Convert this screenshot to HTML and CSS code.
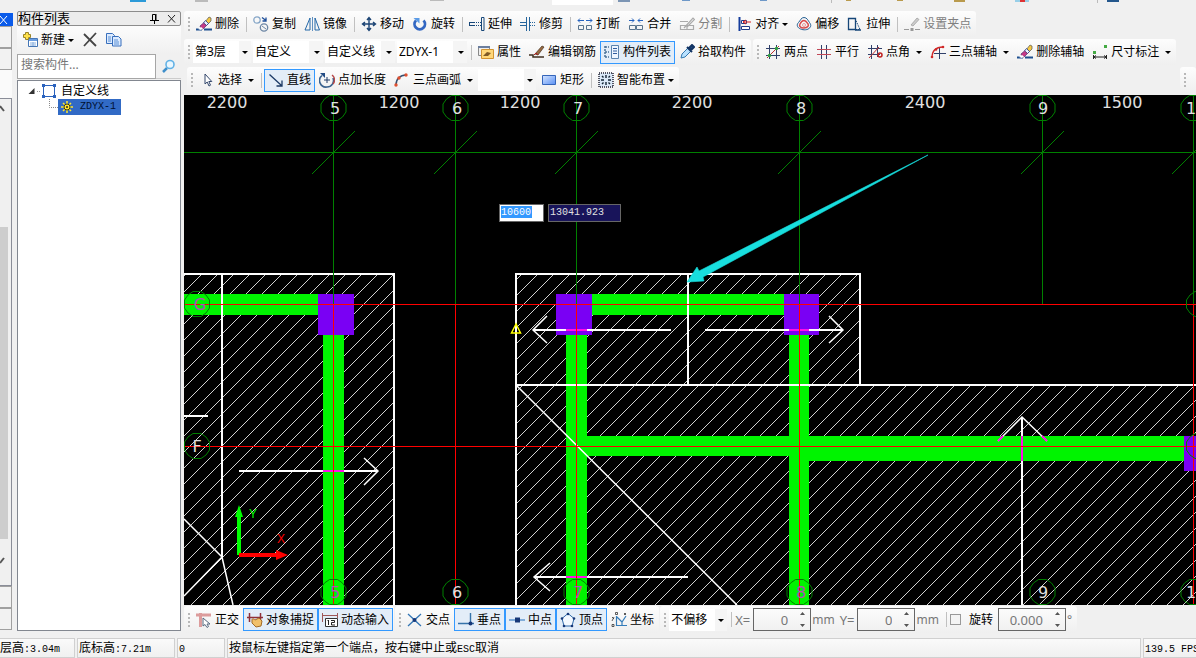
FILE: index.html
```
<!DOCTYPE html>
<html lang="zh-CN">
<head>
<meta charset="utf-8">
<title>构件列表</title>
<link rel="stylesheet" href="styles.css">
</head>
<body>
<svg class="sprite" aria-hidden="true">
  <symbol id="i-erase" viewBox="0 0 16 16"><path d="M0 12.500h6v2H0zM8 12.500h8v2H8z" fill="#1d4f8f"/><path d="M9 6l4-5 2 1v3l-4 4z" fill="#f5c842" stroke="#555" stroke-width=".7"/><path d="M7.500 7l2-2.500 3 3-2 2z" fill="#e8f0ff" stroke="#223a80" stroke-width=".8"/><path d="M4 10l3.500-3 3 2.500L7 13H5z" fill="#c63a86" stroke="#503070" stroke-width=".7"/><path d="M2 13l3-2 2 1.500L5 14z" fill="#fff"/></symbol>
  <symbol id="i-copy" viewBox="0 0 16 16" fill="none"><circle cx="4" cy="4" r="3.200" stroke="#87a7c8" stroke-width="1.300"/><circle cx="11" cy="11.500" r="3.700" stroke="#6d87a5" stroke-width="1.300"/><path d="M9 10l4 3" stroke="#6d87a5"/><path d="M9 1.500l4 3M13 1.500V5H9.500" stroke="#1f4f9a" stroke-width="1.300"/></symbol>
  <symbol id="i-mirror" viewBox="0 0 16 16" fill="none" stroke="#2468a8"><path d="M8.500 1v14" stroke="#6090c0"/><path d="M6 2v12H1zM11 2v12h4.500z"/></symbol>
  <symbol id="i-move" viewBox="0 0 16 16" fill="none" stroke="#1c4474" stroke-width="1.400"><path d="M8 2v12M2 8h12M6 4l2-2.500L10 4M6 12l2 2.500 2-2.500M4 6L1.500 8 4 10M12 6l2.500 2-2.500 2"/></symbol>
  <symbol id="i-rotate" viewBox="0 0 16 16"><path d="M4 4.500a5.200 5.200 0 1 0 7.500 0" fill="none" stroke="#3267c2" stroke-width="2.800"/><path d="M1.500 2h6v5.500z" fill="#5b9be6"/></symbol>
  <symbol id="i-extend" viewBox="0 0 16 16" fill="none" stroke="#164678"><path d="M0 6.500h6M0 9.500h6M.500 6v4"/><path d="M7 6.500h5M7 9.500h5" stroke-dasharray="1 1"/><path d="M12.500 1.500h2.500v13h-2.500z"/></symbol>
  <symbol id="i-trim" viewBox="0 0 16 16" fill="none" stroke="#26659c"><path d="M6.500 1v14M9.500 1v14M0 6.500h6M0 9.500h6"/><path d="M10 6.500h6M10 9.500h6" stroke-dasharray="1 1"/></symbol>
  <symbol id="i-break" viewBox="0 0 16 16" fill="none"><path d="M1.500 9.500h5v4h-5zM9.500 9.500h5v4h-5z" stroke="#58748e"/><path d="M1 4.500h6M3 2.500l-2 2 2 2M9 4.500h6M13 2.500l2 2-2 2" stroke="#2664c0"/></symbol>
  <symbol id="i-join" viewBox="0 0 16 16" fill="none"><path d="M1.500 9.500h6v4h-6zM8.500 9.500h6v4h-6z" stroke="#58748e"/><path d="M1 4.500h5M4 2.500l2 2-2 2M10 4.500h5M12 2.500l-2 2 2 2" stroke="#2664c0"/></symbol>
  <symbol id="i-split" viewBox="0 0 16 16" fill="none" stroke="#aaa"><path d="M1 5.500h8M1.500 9.500h13v4h-13zM8 9v5M5 12l9-10 1.500 1.500L8 11" stroke-width="1.200"/></symbol>
  <symbol id="i-align" viewBox="0 0 16 16"><path d="M3.500 1v14" stroke="#153d9c" stroke-width="2"/><path d="M5.500 4.500h5v3h-5zM5.500 10.500h8v3h-8z" fill="#fff" stroke="#203c88"/><path d="M7 6h8M7 6l3-2M7 6l3 2" stroke="#d72020" fill="none"/></symbol>
  <symbol id="i-offset" viewBox="0 0 16 16" fill="none"><path d="M8 1.500c3 0 4 3 5.500 5s2 4-.5 6-7 1.500-9.500 0-3-4-1-6S5 1.500 8 1.500z" stroke="#245e92"/><path d="M8 4.500c2 0 3 2 4 3.500s0 4-4 4-5-2-4-4 2-3.500 4-3.500z" stroke="#d84c4c" stroke-width="1.500"/><circle cx="8" cy="9" r="1.500" stroke="#e89b9b"/></symbol>
  <symbol id="i-stretch" viewBox="0 0 16 16" fill="none" stroke="#164678"><path d="M1.500 2.500h7v11h-7z" stroke-width="1.300"/><path d="M8 2.500l5 11H8" stroke-dasharray="1.500 1"/><path d="M8 14h6" stroke-width="1.500"/></symbol>
  <symbol id="i-grip" viewBox="0 0 16 16"><path d="M0 13.500h5M11 13.500h5" stroke="#999"/><path d="M6.500 12h3v3h-3z" fill="#999"/><path d="M7 9l6-7 2 1.500L9 10z" fill="#ccc" stroke="#999" stroke-width=".7"/></symbol>
  <symbol id="i-prop" viewBox="0 0 16 16"><path d="M.500 2.500h11v9H.500z" fill="#eee" stroke="#888"/><path d="M0 2h12v2H0z" fill="#6b7e9e"/><path d="M3.500 5.500h12v9h-12z" fill="#ffd778" stroke="#d29431"/><path d="M5 12l4-4 4 1-3 3z" fill="#805a24"/></symbol>
  <symbol id="i-rebar" viewBox="0 0 16 16" fill="none"><path d="M0 11h4v2h11" stroke="#403020" stroke-width="1.500"/><path d="M6 10l7-8 2 1-6 8z" fill="#9a6c42" stroke="#463020" stroke-width=".7"/><path d="M5 11l2-2 2 2" stroke="#b02020"/></symbol>
  <symbol id="i-list" viewBox="0 0 16 16" fill="none"><path d="M1 3h4M1 8h4M1 13h4M1 2v12" stroke="#4a7196" stroke-dasharray="2 1" stroke-width="1.500"/><path d="M7.500 1.500h7v13h-7z" fill="#eef6ff" stroke="#5a83ae"/><path d="M9 4.500h4M9 7h4M9 9.500h4" stroke="#315d9e"/></symbol>
  <symbol id="i-pick" viewBox="0 0 16 16"><path d="M2 14l1-4 6-6 3 3-6 6z" fill="#b9e1ff" stroke="#347ab0"/><path d="M8 3l5 5M10 4l3-3 2 2-3 3z" stroke="#133464" stroke-width="2" fill="#204e86"/></symbol>
  <symbol id="i-two" viewBox="0 0 16 16"><path d="M4.500 1v14M11.500 1v14M1 4.500h14M1 11.500h14" stroke="#30406a" fill="none"/><path d="M2 14L14 2" stroke="#bd3030"/><circle cx="4.500" cy="11.500" r="1.700" fill="#30a040"/><circle cx="11.500" cy="4.500" r="1.700" fill="#30a040"/></symbol>
  <symbol id="i-para" viewBox="0 0 16 16"><path d="M5.500 1v14M10.500 1v14" stroke="#30406a"/><path d="M1 5.500h14M1 10.500h14" stroke="#c24857"/></symbol>
  <symbol id="i-angle" viewBox="0 0 16 16"><path d="M4.500 1v14M10.500 1v12M1 4.500h14M1 10.500h12" stroke="#30406a"/><path d="M2 14L12 3" stroke="#c03030"/><circle cx="13" cy="11" r="2" fill="none" stroke="#c02020" stroke-width="1.500"/></symbol>
  <symbol id="i-arc3" viewBox="0 0 16 16" fill="none"><path d="M9.500 3v12M4 9.500h12" stroke="#30406a"/><path d="M2 14C2 7 6 3 13 3" stroke="#d02828" stroke-width="1.300"/><circle cx="2" cy="13" r="1.300" fill="#d02828"/><circle cx="6" cy="5.500" r="1.300" fill="#d02828"/><circle cx="13" cy="3" r="1.300" fill="#d02828"/></symbol>
  <symbol id="i-dim" viewBox="0 0 16 16" fill="none"><path d="M1 7h3v3H1zM12 1h3v3h-3z" fill="#44aa44"/><path d="M1.500 11v4M14.500 11v4M2 13h12M4 11.500L2 13l2 1.500M12 11.500l2 1.500-2 1.500" stroke="#222"/></symbol>
  <symbol id="i-select" viewBox="0 0 16 16"><path d="M6 2v10l2.200-2 1.800 4 1.500-.8L9.800 9.500h3z" fill="#fff" stroke="#34486c"/></symbol>
  <symbol id="i-line" viewBox="0 0 16 16" fill="none" stroke="#1c3a66" stroke-width="1.300"><path d="M1.500 2.500l12 11M14 8.500v5.500H8.500"/></symbol>
  <symbol id="i-len" viewBox="0 0 16 16" fill="none"><path d="M3 3.500A6.500 6.500 0 0 0 8 15a6.500 6.500 0 0 0 6-9" stroke="#3a628e" stroke-width="1.600"/><path d="M1 1h5v5z" fill="#244c84"/><path d="M13 3a6 6 0 0 1 1 9" stroke="#b84848" stroke-width="1.400"/><path d="M8 5v6M5 8h6" stroke="#203c68"/></symbol>
  <symbol id="i-arc" viewBox="0 0 16 16" fill="none"><path d="M2 13C2 7 6 3 12 3" stroke="#385070" stroke-width="1.500"/><circle cx="2" cy="13" r="1.700" fill="#e05030"/><circle cx="5" cy="6" r="1.700" fill="#e05030"/><circle cx="12" cy="3" r="1.700" fill="#e05030"/></symbol>
  <symbol id="i-rect" viewBox="0 0 16 16"><linearGradient id="g-rect" x2="1" y2="1"><stop stop-color="#d6e6ff"/><stop offset="1" stop-color="#5a90f4"/></linearGradient><path d="M1.500 3.500h13v9h-13z" fill="url(#g-rect)" stroke="#3465ba"/></symbol>
  <symbol id="i-smart" viewBox="0 0 16 16" fill="none"><path d="M1 1h14v14H1z" stroke="#223" stroke-width="1.500" stroke-dasharray="1 1" fill="#dbe9f8"/><path d="M8 3v3M8 10v3M3 8h3M10 8h3M4 4l1.500 1.500M12 4l-1.500 1.500M4 12l1.500-1.500M12 12l-1.500-1.500" stroke="#123" stroke-width="1.400"/></symbol>
  <symbol id="i-ortho" viewBox="0 0 16 16"><path d="M0 3h15M4.500 1v14" stroke="#dc9c9c" stroke-width="3"/><path d="M7 6v8l2-1.500 2 3 1.500-1L11 12h3z" fill="#fff" stroke="#56687e"/></symbol>
  <symbol id="i-snap" viewBox="0 0 16 16"><path d="M2.500 1v9M13.500 1v9M0 5.500h16" stroke="#8f3038" stroke-width="1.500"/><path d="M5 8c0-2 2-1 3 0l4-2 3 3-1 5-5 1-4-4z" fill="#f1c06a" stroke="#a26b26"/></symbol>
  <symbol id="i-dyn" viewBox="0 0 16 16"><path d="M.500 1v9M15.500 1v5M1 3.500h14" stroke="#a05858"/><path d="M3.500 6.500h12v8h-12z" fill="#fff" stroke="#333"/><path d="M6.500 8v5M5.500 9l1-1M9 8.500h3.500v2H9.500v2.500h3.500" stroke="#222" fill="none"/></symbol>
  <symbol id="i-cross" viewBox="0 0 16 16"><path d="M1 2l13 12M14 2L1 14" stroke="#3275b4" stroke-width="1.300"/><circle cx="7.500" cy="8" r="2" fill="#173878"/></symbol>
  <symbol id="i-perp" viewBox="0 0 16 16"><path d="M0 11.500h16M12.500 1v11" stroke="#3573aa" stroke-width="1.400"/><circle cx="12.500" cy="11.500" r="2" fill="#173878"/></symbol>
  <symbol id="i-mid" viewBox="0 0 16 16"><path d="M0 8h16" stroke="#6097d0" stroke-width="1.500"/><path d="M6 5.500h5v5H6z" fill="#173878"/></symbol>
  <symbol id="i-vertex" viewBox="0 0 16 16"><path d="M8 1.500l6 5-2 7.500H4L2 6.500z" fill="#f4f9ff" stroke="#306aaa"/><circle cx="8" cy="2" r="1.300" fill="#173878"/><circle cx="2" cy="6.500" r="1.300" fill="#173878"/><circle cx="14" cy="6.500" r="1.300" fill="#173878"/><circle cx="4" cy="14" r="1.300" fill="#173878"/><circle cx="12" cy="14" r="1.300" fill="#173878"/></symbol>
  <symbol id="i-coord" viewBox="0 0 16 16" fill="none"><path d="M5.500 4v9.500H16M6 5l5 5 4-6M11 10v3" stroke="#347cba" stroke-width="1.200"/><path d="M1 5l2 2M3 5l-2 4M13 1l2 2M15 1l-2 2M1 12.500h2v2H1zM4.500.500h2v2h-2z" stroke="#333" stroke-width=".8"/></symbol>
  <symbol id="i-new" viewBox="0 0 16 16"><path d="M6.500 6.500h9v8h-9z" fill="#fff" stroke="#4576b5"/><path d="M7 7h8v2H7z" fill="#6b9de0"/><path d="M8 11h6M8 13h6M11 10v4" stroke="#8ab0df"/><path d="M3.500.500h3v2h2v3h-2v2h-3v-2h-2v-3h2z" fill="#ffe14a" stroke="#9a8428"/></symbol>
  <symbol id="i-x" viewBox="0 0 16 16"><path d="M2 2l12 12M14 1L2 14" stroke="#444" stroke-width="1.800" fill="none"/></symbol>
  <symbol id="i-pages" viewBox="0 0 16 16"><path d="M.500 1.500h6l2 2v8h-8z" fill="#dcebff" stroke="#386fbc"/><path d="M6.500 4.500h6l2.500 2.500v7H6.500z" fill="#dcebff" stroke="#386fbc"/><path d="M2 5h3M2 7h3M2 9h3M8 8h4M8 10h5M8 12h5" stroke="#5b8fd4"/></symbol>
</svg>

<div class="app">
  <div class="top-strip">
    <svg width="1196" height="5" aria-hidden="true"><path d="M130 0h16v2h-16z" fill="#2c9ad8"/><path d="M195 0h13v2h-13zM430 0h14v1h-14z" fill="#bbb"/><path d="M552 0h61v5h-61z" fill="#fff"/><path d="M618 0h12v2h-12z" fill="#7c95b4"/><path d="M682 0h8v1h-8zM760 0h7v1h-7z" fill="#6e98c8"/><path d="M831.500 0v3M1097.500 0v3" stroke="#bbb"/><path d="M846 0h5v1h-5zM897 0h6v1h-6zM954 0h11v2h-11z" fill="#b99a4c"/><path d="M1015 0h14v2h-14z" fill="#98cfe8"/><path d="M1020 0h5v2h-5z" fill="#d33"/><path d="M1107 0h12v2h-12z" fill="#24578c"/></svg>
  </div>

  <div class="workspace">
    <aside class="dock">
      <button class="dock-close" aria-label="关闭"><svg width="10" height="10" viewBox="0 0 10 10"><path d="M0 1l7 8M7 1L0 9" stroke="#fff" fill="none"/></svg></button>
      <div class="dock-box"></div><div class="dock-box"></div><div class="dock-gap"></div>
      <div class="dock-list">
        <svg width="6" height="8" viewBox="0 0 6 8"><path d="M0 1l4 5" stroke="#555" stroke-width="2"/></svg>
        <div class="dock-thumb"></div>
        <svg width="6" height="8" viewBox="0 0 6 8"><path d="M0 6l4-5" stroke="#555" stroke-width="2"/></svg>
      </div>
      <div class="dock-box"></div><div class="dock-box"></div>
    </aside>

    <section class="panel">
      <header class="panel-title">
        <h1>构件列表</h1>
        <button class="mini" aria-label="固定"><svg width="9" height="10" viewBox="0 0 9 10"><path d="M2.500 6V.500h3V6M6 0v6M0 6.500h9M4.500 7v3" stroke="#000" fill="none"/></svg></button>
        <button class="mini" aria-label="关闭面板"><svg width="9" height="10" viewBox="0 0 9 10"><path d="M1 1l7 7.500M8 1L1 8.500" stroke="#222" fill="none"/></svg></button>
      </header>
      <div class="panel-tools">
        <button class="btn"><svg class="ico"><use href="#i-new"/></svg>新建<i class="caret caret-tight"></i></button>
        <button class="btn" aria-label="删除构件"><svg class="ico"><use href="#i-x"/></svg></button>
        <button class="btn" aria-label="复制构件"><svg class="ico"><use href="#i-pages"/></svg></button>
      </div>
      <div class="search">
        <input type="text" placeholder="搜索构件..." aria-label="搜索构件">
        <button aria-label="搜索"><svg width="14" height="14" viewBox="0 0 14 14"><path d="M1 13l4-4" stroke="#3f8fca" stroke-width="2.500"/><circle cx="8" cy="5.500" r="4" fill="#e9f7ff" stroke="#62b2e6" stroke-width="1.600"/></svg></button>
      </div>
      <ul class="tree">
        <li><svg width="31" height="16" viewBox="0 0 31 16"><path d="M6.500 5v6h-6z" fill="#333"/><path d="M9 8.500h4" stroke="#999" stroke-dasharray="1 1"/><path d="M15.500 2.500h11v11h-11z" fill="none" stroke="#2a62bd"/><path d="M14 1h3v3h-3zM25 1h3v3h-3zM14 12h3v3h-3zM25 12h3v3h-3z" fill="#2a62bd"/></svg><span>自定义线</span>
          <ul>
            <li><svg width="9" height="16" viewBox="0 0 9 16"><path d="M.500 0v8.500H9" fill="none" stroke="#888" stroke-dasharray="1 1"/></svg><span class="picked"><svg width="12" height="12" viewBox="0 0 12 12"><path d="M6 0v12M0 6h12M2 2l8 8M10 2l-8 8" stroke="#ffe82e" stroke-width="1.500"/><circle cx="6" cy="6" r="3" fill="#ffe82e" stroke="#3a3a10"/><circle cx="6" cy="6" r="1" fill="#222"/></svg><span class="mono">ZDYX-1</span></span></li>
          </ul>
        </li>
      </ul>
    </section>

    <main class="main">
      <div class="bars">
        <div class="row">
          <div class="bar"><i class="grip"></i>
            <button class="btn"><svg class="ico"><use href="#i-erase"/></svg>删除</button><i class="sep"></i>
            <button class="btn"><svg class="ico"><use href="#i-copy"/></svg>复制</button>
            <button class="btn"><svg class="ico"><use href="#i-mirror"/></svg>镜像</button><i class="sep"></i>
            <button class="btn"><svg class="ico"><use href="#i-move"/></svg>移动</button>
            <button class="btn"><svg class="ico"><use href="#i-rotate"/></svg>旋转</button><i class="sep"></i>
            <button class="btn"><svg class="ico"><use href="#i-extend"/></svg>延伸</button>
            <button class="btn"><svg class="ico"><use href="#i-trim"/></svg>修剪</button><i class="sep"></i>
            <button class="btn"><svg class="ico"><use href="#i-break"/></svg>打断</button>
            <button class="btn"><svg class="ico"><use href="#i-join"/></svg>合并</button>
            <button class="btn" disabled><svg class="ico"><use href="#i-split"/></svg>分割</button><i class="sep"></i>
            <button class="btn"><svg class="ico"><use href="#i-align"/></svg>对齐<i class="caret caret-tight"></i></button>
            <button class="btn"><svg class="ico"><use href="#i-offset"/></svg>偏移</button>
            <button class="btn"><svg class="ico"><use href="#i-stretch"/></svg>拉伸</button><i class="sep"></i>
            <button class="btn" disabled><svg class="ico"><use href="#i-grip"/></svg>设置夹点</button>
          </div>
        </div>
        <div class="row">
          <div class="bar"><i class="grip"></i>
            <span class="combo"><select aria-label="楼层"><option>第3层</option></select></span>
            <span class="combo combo-wide"><select aria-label="类别"><option>自定义</option></select></span>
            <span class="combo combo-wide"><select aria-label="类型"><option>自定义线</option></select></span>
            <span class="combo combo-wide"><select aria-label="构件"><option>ZDYX-1</option></select></span><i class="sep"></i>
            <button class="btn"><svg class="ico"><use href="#i-prop"/></svg>属性</button>
            <button class="btn"><svg class="ico"><use href="#i-rebar"/></svg>编辑钢筋</button>
            <button class="btn on"><svg class="ico"><use href="#i-list"/></svg>构件列表</button>
            <button class="btn"><svg class="ico"><use href="#i-pick"/></svg>拾取构件</button>
          </div>
          <div class="bar"><i class="grip"></i>
            <button class="btn"><svg class="ico"><use href="#i-two"/></svg>两点</button>
            <button class="btn"><svg class="ico"><use href="#i-para"/></svg>平行</button>
            <button class="btn"><svg class="ico"><use href="#i-angle"/></svg>点角<i class="caret"></i></button>
            <button class="btn"><svg class="ico"><use href="#i-arc3"/></svg>三点辅轴<i class="caret"></i></button>
            <button class="btn"><svg class="ico"><use href="#i-erase"/></svg>删除辅轴</button>
            <button class="btn"><svg class="ico"><use href="#i-dim"/></svg>尺寸标注<i class="caret"></i></button>
          </div>
        </div>
        <div class="row row-inset">
          <div class="bar"><i class="grip"></i>
            <button class="btn"><svg class="ico"><use href="#i-select"/></svg>选择<i class="caret"></i></button><i class="sep"></i>
            <button class="btn on"><svg class="ico"><use href="#i-line"/></svg>直线</button>
            <button class="btn"><svg class="ico"><use href="#i-len"/></svg>点加长度</button>
            <button class="btn"><svg class="ico"><use href="#i-arc"/></svg>三点画弧<i class="caret"></i></button>
            <span class="combo"><select aria-label="画弧参数"><option></option></select></span>
            <button class="btn"><svg class="ico"><use href="#i-rect"/></svg>矩形</button><i class="sep"></i>
            <button class="btn"><svg class="ico"><use href="#i-smart"/></svg>智能布置<i class="caret caret-tight"></i></button>
          </div>
          <div class="bar bar-end"><i class="grip"></i></div>
        </div>
      </div>

      <div class="canvas">
        <svg class="scene" viewBox="184 95 1012 510" preserveAspectRatio="xMinYMin slice" role="img" aria-label="楼层平面图">
          <defs>
            <pattern id="hatch" width="16" height="16" patternUnits="userSpaceOnUse" patternTransform="translate(12 0)"><path d="M-1 17L17 -1" stroke="#d0d0d0" stroke-width="1" shape-rendering="crispEdges"/></pattern>
            <path id="slash" d="M-21.500 21.500L21.500 -21.500" stroke="#008000"/>
            <path id="bubble" d="M-4 -12.500H4L9 -9L12.500 -4V4L9 9L4 12.500H-4L-9 9L-12.500 4V-4L-9 -9Z" fill="none" stroke="#008000"/>
          </defs>
          <rect x="184" y="95" width="1012" height="510" fill="#000"/>
          <g fill="url(#hatch)"><path d="M184 274h210v331H184zM516 274h344v111h336v220H516z"/></g>
          <g fill="#00f400"><path d="M184 294h134v21H184zM323 335h21v270h-21zM592 294h192v21H592zM566 335h21v270h-21zM789 335h20v270h-20zM587 436h202v20H587zM809 436h375v25H809z"/></g>
          <g fill="#7a00f4"><path d="M318 294h36v41h-36zM556 294h36v41h-36zM784 294h35v41h-35zM1184 436h12v35h-12z"/></g>
          <g fill="none" stroke="#fff" stroke-width="2" shape-rendering="crispEdges">
            <path d="M184 274H394V605M222 274V557M184 416H208M239 471H378M516 605V274H860V385M688 274V385M516 385H1196M533 330H671M705 330H843M534 577H688M1022 417V605"/>
          </g>
          <g fill="none" stroke="#fff" stroke-width="1.500">
            <path d="M184 519L222 557L184 596M222 557L233 605M364 458L378 471L364 485M547 316L533 330L547 343M829 316L843 330L829 343M550 563L534 577L550 591M517 386L737 605M998 441L1022 417L1047 441"/>
          </g>
          <path d="M323 471H344M566 330H587M789 330H809M566 577H587M1022 436V461M998 441L1003 436M1042 436L1047 441" stroke="#ff10e8" stroke-width="2" fill="none"/>
          <g fill="none" stroke="#008000" shape-rendering="crispEdges">
            <path d="M184 152.500H1196M333.500 95V304M455.500 95V304M576.500 95V304M799.500 95V304M1042.500 95V304M1193.500 95V304"/>
            <use href="#slash" x="333.500" y="152.500"/><use href="#slash" x="455.500" y="152.500"/><use href="#slash" x="576.500" y="152.500"/><use href="#slash" x="799.500" y="152.500"/><use href="#slash" x="1042.500" y="152.500"/><use href="#slash" x="1193.500" y="152.500"/>
          </g>
          <path d="M184 304.500H1196M184 446.500H1196M333.500 304V605M455.500 304V605M576.500 304V605M799.500 304V605M1193.500 304V605" stroke="#f00" fill="none" shape-rendering="crispEdges"/>
          <g>
            <use href="#bubble" x="333.500" y="108"/><use href="#bubble" x="455.500" y="108"/><use href="#bubble" x="576.500" y="108"/><use href="#bubble" x="799.500" y="108"/><use href="#bubble" x="1042.500" y="108"/><use href="#bubble" x="1193.500" y="108"/>
            <use href="#bubble" x="333.500" y="592"/><use href="#bubble" x="455.500" y="592"/><use href="#bubble" x="576.500" y="592"/><use href="#bubble" x="799.500" y="592"/><use href="#bubble" x="1042.500" y="592"/><use href="#bubble" x="1193.500" y="592"/>
            <use href="#bubble" x="197" y="304"/><use href="#bubble" x="197" y="446"/><use href="#bubble" x="1199" y="304"/><use href="#bubble" x="1199" y="446"/>
          </g>
          <g class="dims">
            <text x="227" y="108">2200</text><text x="399" y="108">1200</text><text x="520" y="108">1200</text><text x="692" y="108">2200</text><text x="925" y="108">2400</text><text x="1122" y="108">1500</text>
            <text x="335" y="114">5</text><text x="457" y="114">6</text><text x="578" y="114">7</text><text x="801" y="114">8</text><text x="1043" y="114">9</text><text x="1191" y="114">1</text>
            <text x="457" y="598">6</text><text x="1043" y="598">9</text><text x="1191" y="598">1</text><text x="197" y="452">F</text>
          </g>
          <g class="dims dims-over"><text x="200" y="310">G</text><text x="335" y="598">5</text><text x="578" y="598">7</text><text x="801" y="598">8</text></g>
          <path d="M516 324L511.500 333H520.500Z" fill="none" stroke="#ff0" stroke-width="1.500"/>
          <path d="M687 282L697 267L699 271L928 155L703 277L704 281Z" fill="#18dede" stroke="#18dede" stroke-width=".6"/>
          <path d="M239 555V515" stroke="#0f0" stroke-width="4"/><path d="M239 505L243 517H235Z" fill="#0f0"/>
          <path d="M239 555H278" stroke="#f00" stroke-width="4"/><path d="M288 555L276 550V560Z" fill="#f00"/>
          <text class="axis axis-y" x="253" y="518">Y</text><text class="axis axis-x" x="281" y="543">X</text>
        </svg>
        <div class="dyn">
          <input class="dyn-x" type="text" value="10600" aria-label="X 坐标">
          <input class="dyn-y" type="text" value="13041.923" aria-label="Y 坐标">
        </div>
      </div>

      <div class="row row-bottom">
        <div class="bar"><i class="grip"></i>
          <button class="btn"><svg class="ico"><use href="#i-ortho"/></svg>正交</button>
          <button class="btn on"><svg class="ico"><use href="#i-snap"/></svg>对象捕捉</button>
          <button class="btn on"><svg class="ico"><use href="#i-dyn"/></svg>动态输入</button>
        </div>
        <div class="bar"><i class="grip"></i>
          <button class="btn"><svg class="ico"><use href="#i-cross"/></svg>交点</button>
          <button class="btn on"><svg class="ico"><use href="#i-perp"/></svg>垂点</button>
          <button class="btn on"><svg class="ico"><use href="#i-mid"/></svg>中点</button>
          <button class="btn on"><svg class="ico"><use href="#i-vertex"/></svg>顶点</button>
          <button class="btn"><svg class="ico"><use href="#i-coord"/></svg>坐标</button>
        </div>
        <div class="bar"><i class="grip"></i>
          <span class="combo"><select aria-label="偏移方式"><option>不偏移</option></select></span><i class="sep"></i>
          <label class="unit" for="off-x">X=</label>
          <span class="spin"><input id="off-x" type="text" value="0"><svg width="7" height="17" viewBox="0 0 7 17"><path d="M3.500 1L6 4H1zM3.500 16L6 13H1z" fill="#555"/></svg></span>
          <span class="unit unit-after">mm</span>
          <label class="unit" for="off-y">Y=</label>
          <span class="spin"><input id="off-y" type="text" value="0"><svg width="7" height="17" viewBox="0 0 7 17"><path d="M3.500 1L6 4H1zM3.500 16L6 13H1z" fill="#555"/></svg></span>
          <span class="unit unit-after">mm</span><i class="sep"></i>
          <label class="check"><input type="checkbox">旋转</label>
          <span class="spin spin-wide"><input type="text" value="0.000" aria-label="旋转角度"><svg width="7" height="17" viewBox="0 0 7 17"><path d="M3.500 1L6 4H1zM3.500 16L6 13H1z" fill="#555"/></svg></span>
          <span class="unit unit-after">°</span>
        </div>
      </div>
    </main>
  </div>

  <footer class="status">
    <span class="cell cell-height">层高<b class="mono">:3.04m</b></span>
    <span class="cell cell-base">底标高<b class="mono">:7.21m</b></span>
    <span class="cell cell-count"><b class="mono">0</b></span>
    <span class="cell cell-hint">按鼠标左键指定第一个端点，按右键中止或<b class="mono">ESC</b>取消</span>
    <span class="cell cell-fps"><b class="mono">139.5 FPS</b></span>
  </footer>
</div>
</body>
</html>
```
FILE: styles.css
```
* { box-sizing: border-box; }
html, body { height: 100%; margin: 0; }
body {
  background: #f0f0f0;
  color: #000;
  font: 12px/16px "Noto Sans", "Noto Sans CJK SC", sans-serif;
  overflow: hidden;
}
button, input, select { font: inherit; color: inherit; margin: 0; }
button { border: 0; background: none; padding: 0; }
i, b { font-style: normal; font-weight: normal; }
.sprite { position: absolute; width: 0; height: 0; }
.mono { font-family: "Liberation Mono", monospace; font-size: 10px; white-space: pre; }

.app { display: flex; flex-direction: column; height: 100vh; }
.top-strip { flex: none; height: 11px; overflow: hidden; }
.top-strip svg { display: block; }
.workspace { flex: 1; min-height: 0; display: flex; }

/* Clipped dock at the window edge */
.dock { flex: none; width: 17px; display: flex; flex-direction: column; padding: 2px 5px 8px 0; }
.dock-close { height: 13px; width: 13px; flex: none; background: #0a5bea; display: flex; align-items: center; }
.dock-box { flex: none; height: 22px; border: solid #a0a0a0; border-width: 1px 1px 1px 0; background: #f2f2f2; }
.dock-gap { flex: none; height: 28px; background: #fafafa; }
.dock-list {
  flex: 1; min-height: 0; display: flex; flex-direction: column; justify-content: space-between;
  padding: 6px 0 20px; border: solid #8a8d98; border-width: 1px 1px 1px 0;
}
.dock-thumb { width: 8px; height: 68%; margin-top: 96px; background: #cdcdcd; }

/* Component list */
.panel { flex: none; width: 164px; display: flex; flex-direction: column; padding-bottom: 7px; }
.panel-title {
  flex: none; display: flex; align-items: center; height: 15px; padding-right: 4px; gap: 8px;
  border: 1px solid #8c8c8c; border-radius: 2px; background: #ececec;
}
.panel-title h1 { flex: 1; margin: 0; font-size: 13px; line-height: 13px; font-weight: normal; }
.mini { display: flex; }
.panel-tools { flex: none; display: flex; align-items: center; height: 28px; padding: 0 0 0 1px; background: linear-gradient(#fcfcfc, #f0f0f0); }
.search { flex: none; display: flex; height: 26px; padding-bottom: 1px; }
.search input { flex: 1; min-width: 0; border: 1px solid #a6a6a6; background: #fff; padding: 0 3px 3px; }
.search input::placeholder { color: #767676; opacity: 1; }
.search button { width: 25px; display: flex; align-items: center; justify-content: center; border-bottom: 1px solid #ccc; }
.tree { flex: 1; margin: 0; border: 1px solid #828790; background: #fff; padding: 2px 0 0 10px; list-style: none; }
.tree ul { margin: 0; padding: 0 0 0 21px; list-style: none; }
.tree svg { vertical-align: top; }
.tree > li > span { padding-left: 2px; }
.tree ul li { display: flex; }
.picked { display: flex; align-items: center; gap: 7px; height: 16px; padding: 0 5px 0 3px; background: #316ac5; color: #001030; }

/* Tool bars */
.main { flex: 1; min-width: 0; display: flex; flex-direction: column; padding-left: 3px; }
.bars { flex: none; display: flex; flex-direction: column; gap: 2px; padding-bottom: 2px; }
.row { flex: none; display: flex; height: 26px; gap: 2px; overflow: hidden; }
.row-inset { padding-left: 3px; }
.row-bottom { height: 33px; padding: 1px 0 5px; gap: 1px; }
.bar { flex: none; display: flex; align-items: center; padding-right: 1px; border-radius: 3px; background: linear-gradient(#fdfdfd, #efefef); white-space: nowrap; }
.bar-end { width: 16px; margin-left: auto; }
.grip { width: 2px; height: 14px; margin: 0 2px 0 4px; background: repeating-linear-gradient(#b8b8b8 0 2px, transparent 2px 4px); }
.btn { display: flex; align-items: center; gap: 3px; height: 23px; padding: 0 3px; border: 1px solid transparent; }
.btn.on { border-color: #3399ff; background: #e3edf8; }
.btn:disabled { color: #808080; }
.ico { flex: none; width: 16px; height: 16px; }
.sep { width: 1px; height: 15px; margin: 0 2px 0 3px; background: #c0c0c0; }
.caret { display: flex; justify-content: flex-end; width: 9px; }
.caret::after { content: ""; border: 3px solid transparent; border-top-color: #000; border-bottom: 0; }
.caret-tight { width: 6px; }
.combo { position: relative; width: 58px; height: 22px; margin: 0 1px; background: linear-gradient(90deg, #fff 80%, #f5f5f5 80%); }
.combo-wide { width: 70px; }
.combo select { width: 100%; height: 100%; border: 0; padding: 0 12px 0 2px; appearance: none; background: none; }
.combo::after { content: ""; position: absolute; right: 3px; top: 10px; border: 3px solid transparent; border-top-color: #000; border-bottom: 0; pointer-events: none; }
.unit { color: #777; font-size: 13px; padding: 0 3px 0 1px; }
.unit-after { font-size: 12px; padding-right: 4px; }
.spin { display: flex; align-items: center; width: 58px; height: 23px; padding-right: 4px; border: 1px solid #666; }
.spin-wide { width: 68px; }
.spin input { flex: 1; width: 0; min-width: 0; border: 0; padding: 0 11px 0 0; background: none; color: #777; font-size: 13px; text-align: right; }
.check { display: flex; align-items: center; gap: 8px; padding: 0 5px 0 1px; }
.check input { appearance: none; width: 11px; height: 11px; border: 1px solid #999; background: #f4f4f4; }

/* Drawing area */
.canvas { flex: 1; min-height: 0; position: relative; background: #000; overflow: hidden; }
.scene { display: block; width: 100%; height: 100%; }
.dims { font: 16px "DejaVu Sans", sans-serif; fill: #e0e0e0; text-anchor: middle; }
.dims-over { fill: #b050b8; }
.axis { font: 12px "Liberation Sans", sans-serif; text-anchor: middle; }
.axis-y { fill: #0f0; }
.axis-x { fill: #f00; }
.dyn { position: absolute; left: 315px; top: 109px; display: flex; gap: 4px; }
.dyn input { height: 18px; border: 1px solid #666; padding: 0 1px 2px; font: 10px "Liberation Mono", monospace; }
.dyn-x { width: 45px; color: #fff; background: linear-gradient(#3399ff, #3399ff) 1px 1px / 31px 12px no-repeat #fff; }
.dyn-y { width: 73px; color: #e0e0e0; background: #18145a; }

/* Status bar */
.status { flex: none; display: flex; gap: 2px; height: 20px; }
.cell { flex: none; padding: 1px 0 0 1px; border: 1px solid #d0d0d0; background: linear-gradient(#fafafa, #f0f0f0); line-height: 16px; white-space: nowrap; overflow: hidden; }
.cell-height { width: 75px; border-left: 0; padding-left: 0; }
.cell-base { width: 98px; }
.cell-count { width: 48px; }
.cell-hint { flex: 1; }
.cell-fps { width: 53px; border-right: 0; }
```
